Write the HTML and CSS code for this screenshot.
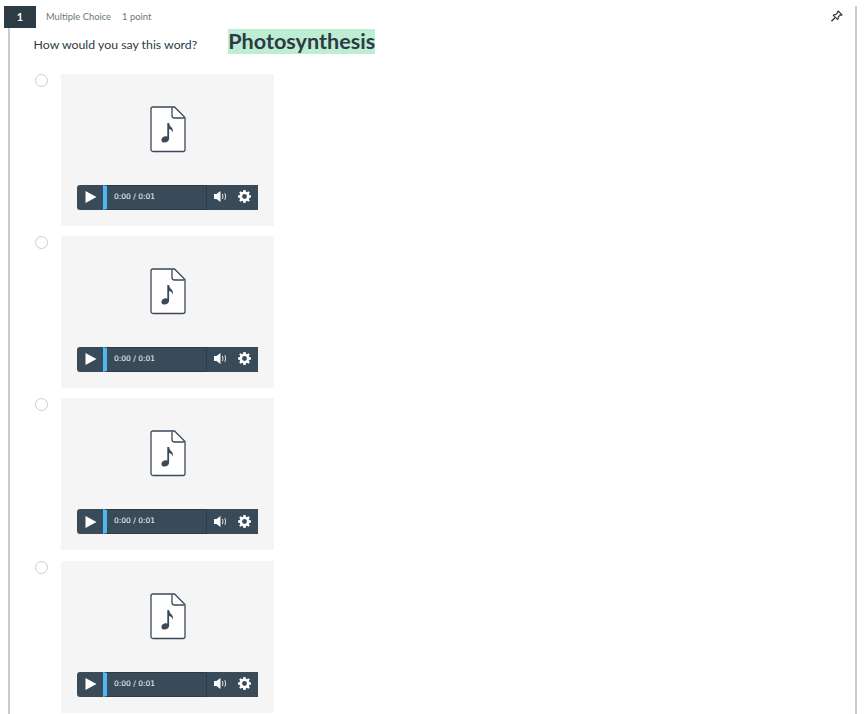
FILE: index.html
```html
<!DOCTYPE html>
<html lang="en">
<head>
    <meta charset="UTF-8">
    <title>Question 1</title>
    <link rel="stylesheet" href="styles.css">
</head>
<body>
    <svg class="icon-defs" width="0" height="0">
        <symbol id="file-music" viewBox="0 0 36 47">
            <path d="M3 1h21.500L35 11.500V43.500a2 2 0 0 1-2 2H3a2 2 0 0 1-2-2V3a2 2 0 0 1 2-2z" fill="#fff" stroke="#3b4a59" stroke-width="1.300"/>
            <path d="M22 1.500V9.500a2.500 2.500 0 0 0 2.500 2.500H34.500" fill="none" stroke="#3b4a59" stroke-width="1.300"/>
            <path d="M17.300 17h1.800c.3 2.300 1.400 3.300 2.500 4.600 1.100 1.300 1.700 2.900 1.100 5.200-.3-1.800-1.500-3.300-3.600-3.700v9.600c0 2.300-2.300 3.800-4.600 3.800-1.900 0-3.100-1-3.100-2.600 0-2.100 2.200-3.600 4.400-3.600.7 0 1.200.1 1.500.4z" fill="#3b4a59"/>
        </symbol>
        <symbol id="play" viewBox="0 0 12 12">
            <path d="M.5 0l11 6-11 6z" fill="#fff"/>
        </symbol>
        <symbol id="volume" viewBox="0 0 14 11">
            <path d="M0 3h2.500L6.500 0v11L2.500 8H0z" fill="#fff"/>
            <path d="M8.300 3c.8 1.500.8 3.500 0 5M10.800 2.200c1 2 1 4.600 0 6.600" fill="none" stroke="#fff" stroke-width=".9"/>
        </symbol>
        <symbol id="gear" viewBox="0 0 24 24">
            <path fill-rule="evenodd" fill="#fff" d="M10 0h4l.6 3.300 1.900.8L19.300 2.200l2.500 2.500-1.900 2.800.8 1.900 3.300.6v4l-3.300.6-.8 1.900 1.900 2.800-2.500 2.500-2.800-1.900-1.900.8L14 24h-4l-.6-3.300-1.900-.8-2.800 1.900-2.500-2.500 1.900-2.800-.8-1.900L0 14v-4l3.300-.6.8-1.900-1.900-2.800 2.500-2.500 2.800 1.900 1.900-.8zM12 7.500a4.500 4.500 0 1 0 0 9 4.500 4.500 0 0 0 0-9z"/>
        </symbol>
    </svg>

    <div class="question">
        <div class="question-header">
            <span class="question-number">1</span>
            <span class="question-type">Multiple Choice</span>
            <span class="question-points">1 point</span>
            <svg class="pin" viewBox="0 0 12 12" width="12" height="12">
                <path d="M7.200 1l3.800 3.800-1 .5-.8-.3-2 2 .1 1.600-.8.8-2.100-2.100L1 11l-.3-.3 3.600-3.300-2-2.100.8-.8 1.600.1 2-2-.3-.8z" fill="#fff" stroke="#2d3b45" stroke-width="1.100"/>
            </svg>
        </div>

        <div class="question-text">
            <span>How would you say this word?</span>
            <strong class="highlight">Photosynthesis</strong>
        </div>

        <div class="answers">
            <!-- Four identical audio answers -->
            <div class="answer">
                <span class="radio"></span>
                <div class="media-card">
                    <svg class="file-icon"><use href="#file-music"/></svg>
                    <div class="player">
                        <button class="play-btn"><svg width="12" height="12"><use href="#play"/></svg></button>
                        <div class="progress"><span class="time">0:00 / 0:01</span></div>
                        <svg class="vol" width="14" height="11"><use href="#volume"/></svg>
                        <svg class="settings" width="13" height="13"><use href="#gear"/></svg>
                    </div>
                </div>
            </div>
            <div class="answer">
                <span class="radio"></span>
                <div class="media-card">
                    <svg class="file-icon"><use href="#file-music"/></svg>
                    <div class="player">
                        <button class="play-btn"><svg width="12" height="12"><use href="#play"/></svg></button>
                        <div class="progress"><span class="time">0:00 / 0:01</span></div>
                        <svg class="vol" width="14" height="11"><use href="#volume"/></svg>
                        <svg class="settings" width="13" height="13"><use href="#gear"/></svg>
                    </div>
                </div>
            </div>
            <div class="answer">
                <span class="radio"></span>
                <div class="media-card">
                    <svg class="file-icon"><use href="#file-music"/></svg>
                    <div class="player">
                        <button class="play-btn"><svg width="12" height="12"><use href="#play"/></svg></button>
                        <div class="progress"><span class="time">0:00 / 0:01</span></div>
                        <svg class="vol" width="14" height="11"><use href="#volume"/></svg>
                        <svg class="settings" width="13" height="13"><use href="#gear"/></svg>
                    </div>
                </div>
            </div>
            <div class="answer">
                <span class="radio"></span>
                <div class="media-card">
                    <svg class="file-icon"><use href="#file-music"/></svg>
                    <div class="player">
                        <button class="play-btn"><svg width="12" height="12"><use href="#play"/></svg></button>
                        <div class="progress"><span class="time">0:00 / 0:01</span></div>
                        <svg class="vol" width="14" height="11"><use href="#volume"/></svg>
                        <svg class="settings" width="13" height="13"><use href="#gear"/></svg>
                    </div>
                </div>
            </div>
        </div>
    </div>
</body>
</html>
```

FILE: styles.css
```css
html, body {
    margin: 0;
    height: 714px;
    overflow: hidden;
    background-color: white;
    font-family: Lato, sans-serif;
    color: #2d3b45;
}
.icon-defs {
    display: block;
}
.question {
    margin: 0 10px 0 8px;
    height: 714px;
    box-sizing: border-box;
    border-left: 2px solid #c7cdd1;
    border-right: 2px solid #c7cdd1;
}
.question-header {
    display: flex;
    align-items: center;
    height: 22px;
    margin-top: 6px;
    margin-left: -6px;
}
.question-number {
    width: 32px;
    height: 22px;
    line-height: 22px;
    text-align: center;
    font-size: 11px;
    font-weight: bold;
    color: white;
    background-color: #2d3b45;
}
.question-type,
.question-points {
    padding-bottom: 2px;
    font-size: 9.400px;
    color: #6b7780;
}
.question-type {
    margin-left: 10px;
}
.question-points {
    margin-left: 11px;
}
.pin {
    margin-left: auto;
    margin-right: 12px;
    margin-top: -2px;
}
.question-text {
    display: flex;
    align-items: baseline;
    height: 26px;
    margin-top: 1px;
    margin-left: 23.600px;
    font-size: 12.300px;
}
.highlight {
    margin-left: 31px;
    line-height: 25px;
    font-size: 21.600px;
    background-color: #bdedd2;
}
.answers {
    display: flex;
    flex-direction: column;
    gap: 10.300px;
    margin-top: 18.700px;
    margin-left: 25px;
}
.answer {
    display: flex;
    align-items: flex-start;
}
.radio {
    width: 11px;
    height: 11px;
    border: 1px solid #c7cdd1;
    border-radius: 50%;
    background-color: white;
}
.media-card {
    display: flex;
    flex-direction: column;
    align-items: center;
    width: 213px;
    height: 152px;
    margin-left: 13px;
    background-color: #f5f5f5;
}
.file-icon {
    width: 36px;
    height: 47px;
    margin-top: 32px;
}
.player {
    display: flex;
    align-items: center;
    width: 181px;
    height: 25px;
    margin-top: 32px;
    border-radius: 3px 0 0 3px;
    background-color: #394b58;
}
.play-btn {
    display: flex;
    align-items: center;
    justify-content: center;
    width: 26px;
    height: 25px;
    padding: 0 0 0 1px;
    border: none;
    background: none;
}
.progress {
    display: flex;
    align-items: center;
    box-sizing: border-box;
    width: 104px;
    height: 25px;
    padding: 0 0 2px 7px;
    border: 1px solid #2d3b45;
    border-left: 4px solid #4db8f5;
}
.time {
    font-family: "DejaVu Sans", sans-serif;
    font-size: 7.500px;
    color: white;
}
.vol {
    margin-left: 7px;
    margin-bottom: 1px;
}
.settings {
    margin-left: 10px;
    margin-bottom: 1px;
}
```
